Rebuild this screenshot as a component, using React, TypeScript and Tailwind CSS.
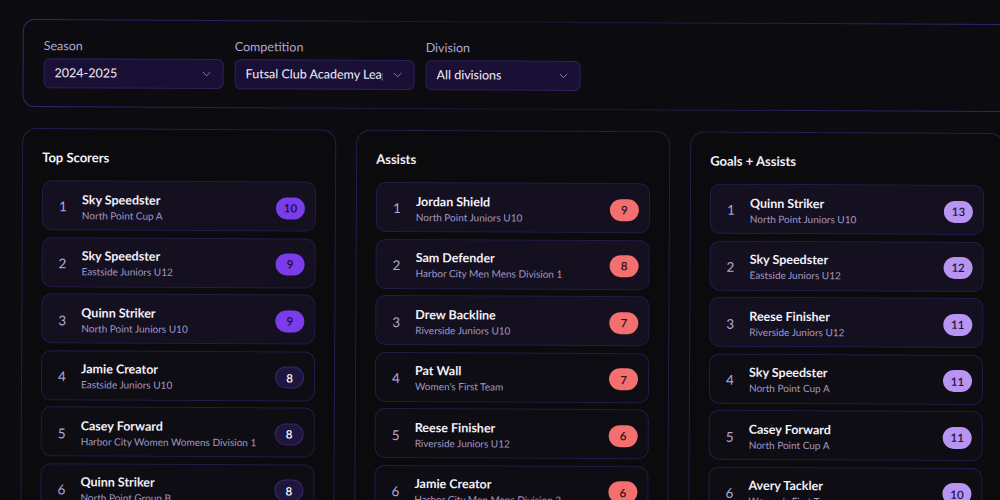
import { ChevronDown } from "lucide-react";

type Row = { name: string; team: string; value: number };

const scorers: Row[] = [
  { name: "Sky Speedster", team: "North Point Cup A", value: 10 },
  { name: "Sky Speedster", team: "Eastside Juniors U12", value: 9 },
  { name: "Quinn Striker", team: "North Point Juniors U10", value: 9 },
  { name: "Jamie Creator", team: "Eastside Juniors U10", value: 8 },
  { name: "Casey Forward", team: "Harbor City Women Womens Division 1", value: 8 },
  { name: "Quinn Striker", team: "North Point Group B", value: 8 },
  { name: "Drew Backline", team: "Riverside Juniors U10", value: 7 },
];

const assists: Row[] = [
  { name: "Jordan Shield", team: "North Point Juniors U10", value: 9 },
  { name: "Sam Defender", team: "Harbor City Men Mens Division 1", value: 8 },
  { name: "Drew Backline", team: "Riverside Juniors U10", value: 7 },
  { name: "Pat Wall", team: "Women's First Team", value: 7 },
  { name: "Reese Finisher", team: "Riverside Juniors U12", value: 6 },
  { name: "Jamie Creator", team: "Harbor City Men Mens Division 2", value: 6 },
  { name: "Avery Tackler", team: "Women's First Team", value: 5 },
];

const combined: Row[] = [
  { name: "Quinn Striker", team: "North Point Juniors U10", value: 13 },
  { name: "Sky Speedster", team: "Eastside Juniors U12", value: 12 },
  { name: "Reese Finisher", team: "Riverside Juniors U12", value: 11 },
  { name: "Sky Speedster", team: "North Point Cup A", value: 11 },
  { name: "Casey Forward", team: "North Point Cup A", value: 11 },
  { name: "Avery Tackler", team: "Women's First Team", value: 10 },
  { name: "Jordan Shield", team: "North Point Juniors U10", value: 9 },
];

function Select({ label, value, width }: { label: string; value: string; width: string }) {
  return (
    <div className={`flex flex-col gap-[4px] ${width}`}>
      <span className="text-[12.5px] leading-4 text-[#b3a7d8]">{label}</span>
      <div className="flex h-[30px] items-center justify-between rounded-md border border-[#2e2160] bg-[#1a1035] pl-[10px] pr-[9px]">
        <span className="overflow-hidden whitespace-nowrap text-[12.5px] text-[#f1eefa]">{value}</span>
        <ChevronDown size={14} strokeWidth={1.6} className="ml-2 shrink-0 text-[#8e85aa]" />
      </div>
    </div>
  );
}

function Board({ title, rows, kind }: { title: string; rows: Row[]; kind: "violet" | "red" | "lavender" }) {
  const badge = (i: number) => {
    if (kind === "red") return "bg-[#f46f6f] text-[#2a0f14]";
    if (kind === "lavender") return "bg-[#b995f3] text-[#1d1236]";
    return i < 3 ? "bg-[#7b3cea] text-[#170b33]" : "bg-[#1f1640] border border-[#34286a] text-white";
  };
  return (
    <div className="w-[314px] shrink-0 rounded-[14px] border border-[#271d4f] bg-[#0b0a0d] px-[19px] pt-[20px] pb-6">
      <h3 className="text-[13px] font-bold leading-4 text-[#f4f2fa]">{title}</h3>
      <div className="mt-[15px] flex flex-col gap-[6.6px]">
        {rows.map((r, i) => (
          <div
            key={i}
            className={`flex h-[50px] items-center rounded-[10px] border border-[#251b4a] pt-[3px] pl-4 pr-[10px] ${
              i < 3 ? "bg-[#14101f]" : "bg-[#0e0d13]"
            }`}
          >
            <span className="w-[23px] text-[13.5px] text-[#b1a6d4]">{i + 1}</span>
            <div className="flex min-w-0 flex-1 flex-col">
              <span className="text-[12.5px] font-bold leading-4 text-[#f3f1fa]">{r.name}</span>
              <span className="truncate text-[10px] leading-[14px] text-[#a398c6]">{r.team}</span>
            </div>
            <span
              className={`flex h-[22px] w-[29px] items-center justify-center rounded-full text-[11.5px] font-semibold ${badge(i)}`}
            >
              {r.value}
            </span>
          </div>
        ))}
      </div>
    </div>
  );
}

export default function App() {
  return (
    <div className="h-[500px] w-[1000px] overflow-hidden bg-[#0c0c0e]" style={{ fontFamily: "Lato, 'Noto Sans', sans-serif" }}>
      <div className="ml-[23px] w-[990px] origin-top-left rotate-[0.3deg] pt-[19px]">
        <div className="rounded-xl bg-gradient-to-r from-[#33247a] via-[#1a1630] to-[#33247a] p-px">
          <div className="flex gap-[11px] rounded-[11px] bg-[#0c0b0f] px-5 pt-[18px] pb-[18px]">
            <Select label="Season" value="2024-2025" width="w-[180px]" />
            <Select label="Competition" value="Futsal Club Academy League" width="w-[180px]" />
            <Select label="Division" value="All divisions" width="w-[155px]" />
          </div>
        </div>
        <div className="mt-[21px] flex gap-[20px]">
          <Board title="Top Scorers" rows={scorers} kind="violet" />
          <Board title="Assists" rows={assists} kind="red" />
          <Board title="Goals + Assists" rows={combined} kind="lavender" />
        </div>
      </div>
    </div>
  );
}
